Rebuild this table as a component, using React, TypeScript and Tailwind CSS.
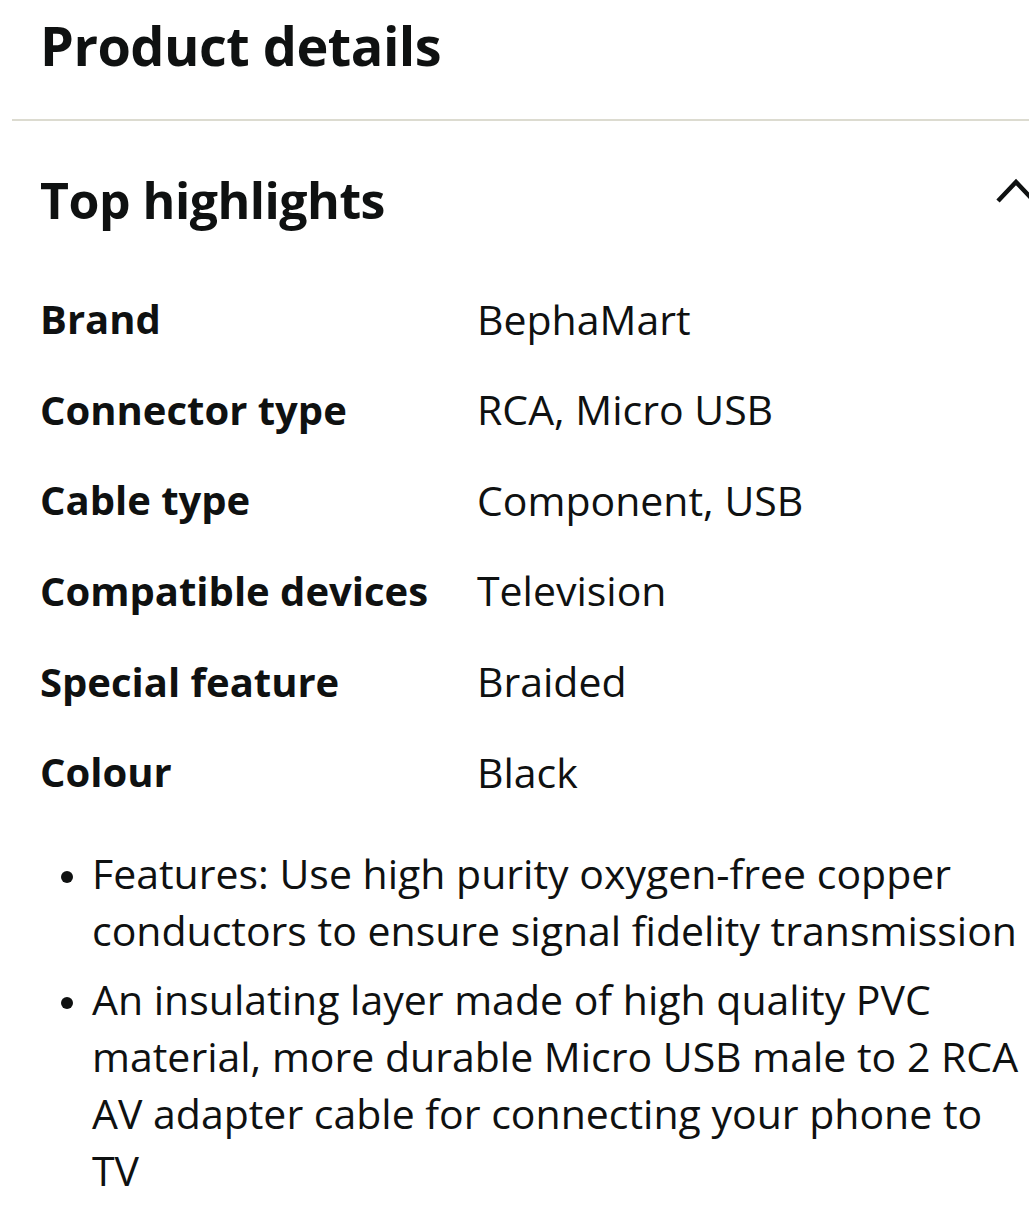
const rows: [string, string][] = [
  ["Brand", "BephaMart"],
  ["Connector type", "RCA, Micro USB"],
  ["Cable type", "Component, USB"],
  ["Compatible devices", "Television"],
  ["Special feature", "Braided"],
  ["Colour", "Black"],
];

const bullets = [
  "Features: Use high purity oxygen-free copper conductors to ensure signal fidelity transmission",
  "An insulating layer made of high quality PVC material, more durable Micro USB male to 2 RCA AV adapter cable for connecting your phone to TV",
];

export default function App() {
  return (
    <div
      className="w-[1029px] h-[1208px] overflow-hidden bg-white text-[#0f1111]"
      style={{ fontFamily: '"Open Sans", "Noto Sans", sans-serif' }}
    >
      {/* Heading */}
      <div className="pl-[40px] h-[119px] pt-[10px]">
        <h1 className="text-[54px] font-bold leading-[70px] tracking-[-0.5px]">Product details</h1>
      </div>
      <div className="ml-[12px] h-[2px] bg-[#dcdbd0]" />

      {/* Top highlights */}
      <div className="flex items-center justify-between pl-[40px] h-[153px]">
        <h2 className="text-[50px] font-bold tracking-[-0.5px] mt-[5px]">Top highlights</h2>
        <svg
          width="42"
          height="26"
          viewBox="0 0 42 26"
          className="mr-[-8px] mb-[13px] shrink-0"
          fill="none"
          stroke="#0f1111"
          strokeWidth="4.5"
        >
          <polyline points="3,23 21,4 39,23" />
        </svg>
      </div>

      {/* Table */}
      <div className="pl-[40px]">
        {rows.map(([k, v]) => (
          <div key={k} className="flex items-center h-[90.6px]">
            <div className="w-[437px] font-bold text-[40px]">{k}</div>
            <div className="text-[41px]">{v}</div>
          </div>
        ))}
      </div>

      {/* Bullets */}
      <ul className="pl-[92px] pr-[8px] mt-[27px] list-disc text-[41px] leading-[57px]">
        {bullets.map((b) => (
          <li key={b} className="mb-[12px] marker:text-[34px]">
            {b}
          </li>
        ))}
      </ul>
    </div>
  );
}
